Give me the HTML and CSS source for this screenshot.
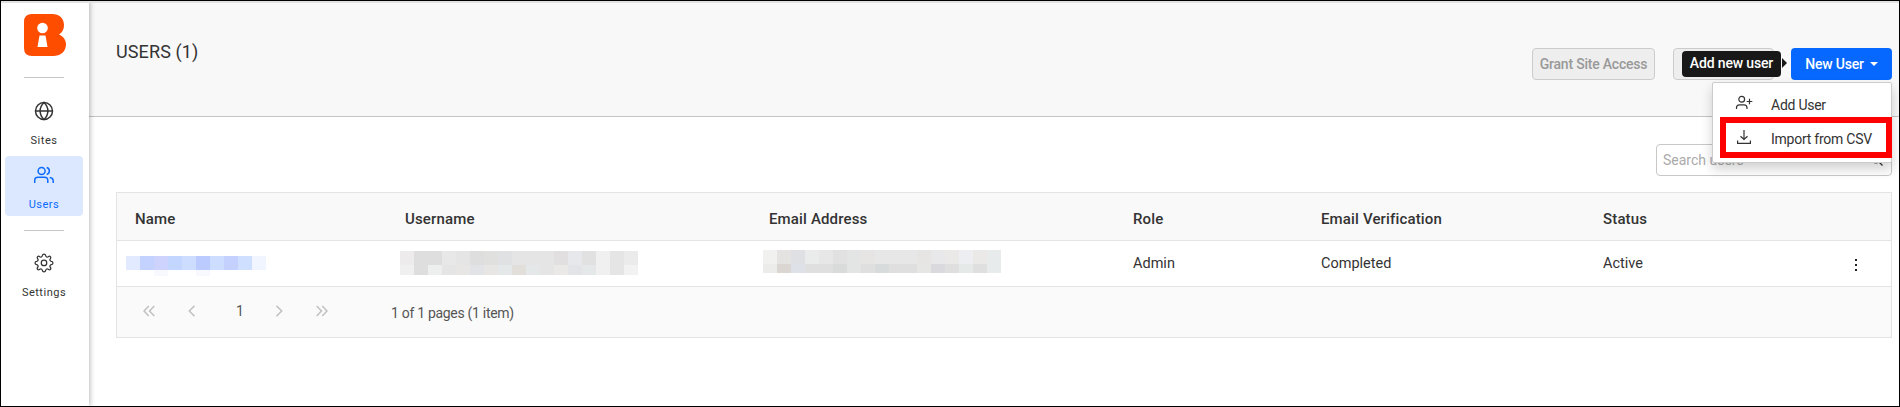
FILE: index.html
```
<!DOCTYPE html>
<html lang="en">
<head>
<meta charset="utf-8">
<title>Users</title>
<link rel="stylesheet" href="styles.css">
</head>
<body>
<div class="app">
  <nav class="sidebar">
    <svg class="logo" width="42" height="42" viewBox="0 0 42 42"><path fill="#ff4d00" d="M8 0H28C35.500 0 40 4.500 40 11C40 15 38.500 18.500 35 20.500C39.500 22.500 42 26 42 30.500C42 37.500 36.500 42 29 42H8Q0 42 0 34V8Q0 0 8 0Z"/><circle cx="18.500" cy="14" r="5.300" fill="#fff"/><path fill="#fff" d="M16 21.500H21.500L23.500 33H13.500L15.500 21.500Z"/></svg>
    <hr class="rule">
    <a class="nav-item">
      <svg class="icon" width="20" height="20" viewBox="0 0 20 20"><circle cx="10" cy="10" r="8.500"/><path d="M1.500 10H18.500M10 1.500C4.800 6.500 4.800 13.500 10 18.500C15.200 13.500 15.200 6.500 10 1.500Z"/></svg>
      <span>Sites</span>
    </a>
    <a class="nav-item active">
      <svg class="icon" width="20" height="20" viewBox="0 0 20 20"><circle cx="7.600" cy="6" r="3.500"/><path d="M.7 18V15.500Q.7 12.300 4 12.300H10.500Q13.800 12.300 13.800 15.500V18M12.700 2.600A3.500 3.500 0 0 1 12.700 9.400M15.700 12.500Q19.200 13 19.200 16V18"/></svg>
      <span>Users</span>
    </a>
    <hr class="rule low">
    <a class="nav-item">
      <svg class="icon" width="20" height="20" viewBox="0 0 24 24"><circle cx="12" cy="12" r="3.300"/><path d="M10 3.200C10.400.6 13.600.6 14 3.200C14.300 4.800 15.800 5.400 17.100 4.500C19.200 2.900 21.100 4.900 19.500 6.900C18.600 8.200 19.200 9.700 20.800 10C23.400 10.400 23.400 13.600 20.800 14C19.200 14.300 18.600 15.800 19.500 17.100C21.100 19.200 19.200 21.100 17.100 19.500C15.800 18.600 14.300 19.200 14 20.800C13.600 23.400 10.400 23.400 10 20.800C9.700 19.200 8.200 18.600 6.900 19.500C4.900 21.100 2.900 19.200 4.500 17.100C5.400 15.800 4.800 14.300 3.200 14C.6 13.600.6 10.400 3.200 10C4.800 9.700 5.400 8.200 4.500 6.900C2.900 4.900 4.900 2.900 6.900 4.500C8.200 5.400 9.700 4.800 10 3.200Z"/></svg>
      <span>Settings</span>
    </a>
  </nav>
  <main class="main">
    <header class="header">
      <h1 class="title">USERS (1)</h1>
      <div class="actions">
        <button class="btn muted grant">Grant Site Access</button>
        <div class="more-wrap">
          <button class="btn muted more"></button>
          <div class="tooltip">Add new user</div>
        </div>
        <div class="new-wrap">
          <button class="btn primary">New User<i class="caret"></i></button>
          <div class="menu">
            <a class="menu-item">
              <svg class="icon thin" width="18" height="16" viewBox="0 0 18 16"><circle cx="6.700" cy="4.300" r="2.900"/><path d="M1.500 14V12.800Q1.500 9.900 4.500 9.900H9Q12 9.900 12 12.800V14M11.700 6.500H17.300M14.500 3.800V9.200"/></svg>
              <span>Add User</span>
            </a>
            <a class="menu-item">
              <svg class="icon thin" width="18" height="16" viewBox="0 0 18 16"><path d="M9 1V10.500M5.500 7.200L9 10.500L12.500 7.200M2.600 11.500V14.300H15.400V11.500"/></svg>
              <span>Import from CSV</span>
            </a>
            <div class="highlight"></div>
          </div>
        </div>
      </div>
    </header>
    <section class="content">
      <div class="search">
        <span>Search users</span>
        <svg class="icon thin" width="14" height="14" viewBox="0 0 14 14"><circle cx="6" cy="6" r="4"/><path d="M9 9L12.500 12.500"/></svg>
      </div>
      <div class="table">
        <div class="row head">
          <span>Name</span><span>Username</span><span>Email Address</span><span>Role</span><span>Email Verification</span><span>Status</span><span></span>
        </div>
        <div class="row body">
          <span class="cell-name"><svg width="140" height="20" viewBox="0 0 140 20" shape-rendering="crispEdges"><path fill="#e1eaff" d="M0 0h14v14H0z"/><path fill="#c3d2ff" d="M14 0h14v14H14z"/><path fill="#cdd3fc" d="M28 0h14v14H28z"/><path fill="#c3d6ff" d="M42 0h14v14H42z"/><path fill="#cdddff" d="M56 0h14v14H56zM84 0h14v14H84z"/><path fill="#bccbff" d="M70 0h14v14H70z"/><path fill="#c4d1ff" d="M98 0h14v14H98z"/><path fill="#cfdfff" d="M112 0h14v14H112z"/><path fill="#f1f5ff" d="M126 0h14v14H126z"/><path fill="#f8f9ff" d="M28 14h14v6H28zM70 14h14v6H70z"/></svg></span>
          <span class="cell-user"><svg width="238" height="24" viewBox="0 0 238 24" shape-rendering="crispEdges"><path fill="#e5e5e5" d="M0 0h238v24H0z"/><path fill="#edebec" d="M0 0h14v14H0z"/><path fill="#f0f0f0" d="M0 14h14v10H0zM196 0h14v24H196z"/><path fill="#dedede" d="M14 0h28v14H14zM14 14h14v10H14zM70 0h14v14H70z"/><path fill="#ecefee" d="M28 14h14v10H28z"/><path fill="#e8e8e8" d="M42 0h14v14H42z"/><path fill="#e8e6e4" d="M56 14h14v10H56zM84 14h14v10H84z"/><path fill="#e2e3e6" d="M70 14h14v10H70z"/><path fill="#e0e0de" d="M84 0h14v14H84z"/><path fill="#dfe1e3" d="M98 0h14v14H98z"/><path fill="#e5e8e8" d="M98 14h14v10H98zM126 14h14v10H126zM182 14h14v10H182z"/><path fill="#e2dfda" d="M112 14h14v10H112z"/><path fill="#e2dfe1" d="M154 0h14v14H154z"/><path fill="#ebe9e7" d="M154 14h14v10H154z"/><path fill="#e6e8eb" d="M168 0h14v14H168z"/><path fill="#e2e4e7" d="M168 14h14v10H168z"/><path fill="#e1e1e1" d="M182 0h14v14H182z"/><path fill="#ebebeb" d="M224 0h14v14H224z"/><path fill="#f2f2f2" d="M224 14h14v10H224z"/></svg></span>
          <span class="cell-mail"><svg width="238" height="23" viewBox="0 0 238 23" shape-rendering="crispEdges"><path fill="#e7e7e7" d="M0 0h238v14H0z"/><path fill="#dfdfdf" d="M0 14h238v9H0z"/><path fill="#f1f1ef" d="M0 0h14v14H0z"/><path fill="#ececea" d="M0 14h14v9H0z"/><path fill="#e4e3e1" d="M14 0h14v14H14z"/><path fill="#dcd6d3" d="M14 14h14v9H14z"/><path fill="#dee0e3" d="M28 0h14v14H28z"/><path fill="#dee2e8" d="M28 14h14v9H28z"/><path fill="#eaecec" d="M42 0h14v14H42z"/><path fill="#e1e1e1" d="M70 0h14v14H70z"/><path fill="#d9dada" d="M70 14h14v9H70z"/><path fill="#e3e5e5" d="M84 0h14v14H84zM84 14h14v9H84z"/><path fill="#e7e5e4" d="M98 0h14v14H98zM154 0h14v14H154z"/><path fill="#d7dbdc" d="M112 14h14v9H112z"/><path fill="#e6e6e4" d="M154 14h14v9H154z"/><path fill="#e8e8eb" d="M168 0h14v14H168z"/><path fill="#dad9dd" d="M168 14h14v9H168z"/><path fill="#ebe9e7" d="M182 0h14v14H182zM210 0h14v14H210z"/><path fill="#eceef1" d="M196 0h14v14H196z"/><path fill="#e5e9e8" d="M196 14h14v9H196z"/><path fill="#e8ebec" d="M224 0h14v23H224z"/></svg></span>
          <span>Admin</span><span>Completed</span><span>Active</span>
          <span class="kebab"><svg width="4" height="14" viewBox="0 0 4 14"><path fill="#222" d="M1 1h2v2H1zM1 6h2v2H1zM1 11h2v2H1z"/></svg></span>
        </div>
        <div class="pager">
          <svg class="arrows" width="12" height="12" viewBox="0 0 12 12"><path d="M5.800 1L1 6L5.800 11M11.300 1L6.500 6L11.300 11"/></svg>
          <svg class="arrows" width="8" height="12" viewBox="0 0 8 12"><path d="M6.500 .8L1.300 6L6.500 11.200"/></svg>
          <span class="page">1</span>
          <svg class="arrows" width="8" height="12" viewBox="0 0 8 12"><path d="M1.500 .8L6.700 6L1.500 11.200"/></svg>
          <svg class="arrows" width="12" height="12" viewBox="0 0 12 12"><path d="M.7 1L5.500 6L.7 11M6.200 1L11 6L6.200 11"/></svg>
          <span class="summary">1 of 1 pages (1 item)</span>
        </div>
      </div>
    </section>
  </main>
</div>
</body>
</html>
```
FILE: styles.css
```
* { box-sizing: border-box; }
body { margin: 0; font-family: Roboto, "Liberation Sans", sans-serif; color: #333; background: #fff; }
.app { display: flex; width: 1900px; height: 407px; border: 1px solid #000; overflow: hidden; }
.app::before { content: ""; position: absolute; left: 1px; top: 1px; width: 1898px; height: 2px; background: #e2e2e2; z-index: 5; }
.sidebar { width: 88px; flex: none; display: flex; flex-direction: column; align-items: center; padding: 13px 2px 0 0; box-shadow: 1px 0 5px rgba(0,0,0,.28); position: relative; z-index: 1; background: #fff; }
.logo { display: block; margin-left: 1px; flex: none; }
.rule { width: 40px; height: 1px; border: 0; background: #c6c6c6; margin: 21px 0 18px; flex: none; }
.rule.low { margin: 14px 0 17px; }
.nav-item { width: 78px; height: 60px; flex: none; display: flex; flex-direction: column; align-items: center; border-radius: 4px; padding-top: 5px; font-size: 11px; line-height: 14px; letter-spacing: .5px; gap: 13px; color: #333; }
.nav-item.active { background: #dbe8ff; color: #0d6bff; padding-top: 9px; }
.nav-item .icon { flex: none; }
.icon { display: block; fill: none; stroke: currentColor; stroke-width: 1.5; }
.icon.thin { stroke-width: 1.2; }
.main { flex: 1; min-width: 0; }
.header { height: 116px; background: #f8f8f8; border-bottom: 1px solid #c4c4c4; display: flex; justify-content: space-between; padding: 0 7px 0 27px; }
.title { margin: 40px 0 0; font-size: 18px; line-height: 21px; font-weight: 400; letter-spacing: .12px; color: #333; }
.actions { display: flex; margin-top: 47px; height: 32px; }
.btn { display: flex; align-items: center; justify-content: center; height: 32px; border-radius: 4px; font: 500 14px/16px Roboto, sans-serif; letter-spacing: -.22px; padding: 0; white-space: nowrap; }
.muted { background: #eee; border: 1px solid #ccc; color: #999; }
.grant { width: 123px; margin-right: 18px; }
.more { width: 101px; margin-right: 17px; }
.more-wrap, .new-wrap { position: relative; }
.primary { width: 101px; background: #0768ff; border: 0; color: #fff; }
.caret { border: 4px solid transparent; border-top-color: #fff; border-bottom: 0; margin-left: 6px; }
.tooltip { position: absolute; left: 9px; top: 3px; width: 99px; height: 26px; border-radius: 4px; background: #181818; color: #fff; font: 500 14px/25px Roboto, sans-serif; letter-spacing: -.15px; text-align: center; white-space: nowrap; }
.tooltip::after { content: ""; position: absolute; left: 100px; top: 7px; border: 5px solid transparent; border-left-color: #181818; border-right: 0; }
.menu { position: absolute; right: 0; top: 34px; width: 180px; height: 81px; border: 1px solid #ccc; border-radius: 2px; background: #fff; box-shadow: 0 6px 12px rgba(0,0,0,.18); padding-top: 6px; z-index: 3; }
.menu-item { display: flex; height: 34px; align-items: center; padding-left: 22px; font-size: 14px; letter-spacing: -.25px; color: #333; gap: 18px; white-space: nowrap; }
.menu-item .icon { margin-top: -6px; }
.menu-item span { margin-top: -3px; }
.highlight { position: absolute; left: 7px; top: 34px; width: 172px; height: 41px; border: 6px solid #f00; }
.content { padding: 27px 7px 0 27px; }
.search { width: 236px; height: 32px; margin-left: auto; border: 1px solid #c8c8c8; border-radius: 4px; display: flex; justify-content: space-between; align-items: center; padding: 0 7px 1px 6px; font-size: 14px; color: #aaa; }
.search .icon { color: #333; }
.table { margin-top: 16px; border: 1px solid #e4e4e4; height: 146px; }
.row { display: grid; grid-template-columns: 270px 364px 364px 188px 282px 252px auto; padding-left: 18px; align-items: center; border-bottom: 1px solid #e4e4e4; font-size: 15px; }
.head { height: 48px; background: #f9f9f9; font-weight: 500; padding-top: 5px; letter-spacing: .15px; }
.body { height: 46px; padding-bottom: 1px; font-size: 14.500px; }
.row svg { display: block; }
.cell-name { margin-left: -9px; padding-top: 6px; }
.cell-user { margin-left: -5px; }
.cell-mail { margin-left: -6px; padding-bottom: 3px; }
.kebab { padding-top: 3px; margin-left: -1px; }
.pager { height: 50px; background: #fafafa; display: flex; align-items: center; padding: 0 0 3px 26px; font-size: 14px; color: #555; }
.arrows { fill: none; stroke: #c0c0c0; stroke-width: 1.5; margin-right: 33px; }
.page { width: 8px; margin: 0 31px 0 7px; }
.summary { margin: 4px 0 0 30px; letter-spacing: -.3px; }
```
